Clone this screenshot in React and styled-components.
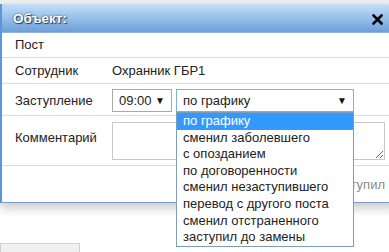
import React, { useState } from "react";
import styled, { createGlobalStyle } from "styled-components";

const GlobalStyle = createGlobalStyle`
  html, body {
    margin: 0;
    padding: 0;
    background: #ffffff;
    overflow: hidden;
    font-family: "Liberation Sans", Arial, sans-serif;
    font-size: 13px;
    color: #222;
  }
`;

const options = [
  "по графику",
  "сменил заболевшего",
  "с опозданием",
  "по договоренности",
  "сменил незаступившего",
  "перевод с другого поста",
  "сменил отстраненного",
  "заступил до замены",
];

const App = () => {
  const [selected, setSelected] = useState(0);

  return (
    <Page>
      <GlobalStyle />
      <TopStrip />
      <Dialog>
        <Header>
          <Title>Объект:</Title>
          <Close>
            <svg width="11" height="11" viewBox="0 0 11 11">
              <path
                d="M1.5 1.5 L9.5 9.5 M9.5 1.5 L1.5 9.5"
                stroke="#000"
                strokeWidth="2.6"
                strokeLinecap="square"
              />
            </svg>
          </Close>
        </Header>
        <Row height={25}>
          <Label>Пост</Label>
        </Row>
        <Row height={26}>
          <Label>Сотрудник</Label>
          <Value>Охранник ГБР1</Value>
        </Row>
        <Row height={32} top>
          <Label shift={4}>Заступление</Label>
          <Controls>
            <FakeSelect width={60}>
              09:00
              <Arrow>▼</Arrow>
            </FakeSelect>
            <SelectWrap>
              <FakeSelect width={178} focused>
                {options[selected]}
                <Arrow>▼</Arrow>
              </FakeSelect>
              <List>
                {options.map((o, i) => (
                  <Option
                    key={i}
                    active={i === selected}
                    onClick={() => setSelected(i)}
                  >
                    {o}
                  </Option>
                ))}
              </List>
            </SelectWrap>
          </Controls>
        </Row>
        <Row height={50} top>
          <Label shift={9}>Комментарий</Label>
          <Comment />
        </Row>
        <Footer>
          <FooterLink>Заступил</FooterLink>
        </Footer>
      </Dialog>
      <BottomBox />
    </Page>
  );
};

export default App;

const Page = styled.div`
  width: 389px;
  height: 252px;
  overflow: hidden;
  position: relative;
`;

const TopStrip = styled.div`
  height: 4px;
  background: #efefef;
`;

const Dialog = styled.div`
  width: 395px;
  background: #fff;
  border-left: 2px solid #5b95dc;
  border-bottom: 1px solid #7b9bcc;
  box-shadow: 0 5px 10px rgba(0, 0, 0, 0.22);
  box-sizing: border-box;
`;

const Header = styled.div`
  height: 29px;
  display: flex;
  align-items: center;
  justify-content: space-between;
  padding: 0 8px 0 11px;
  box-sizing: border-box;
  width: 389px;
  background: linear-gradient(#c3dff8, #9cc3ec 45%, #6c9fd8);
  border-bottom: 1px solid #8fb3de;
`;

const Title = styled.span`
  font-weight: bold;
  font-size: 13.5px;
  color: #fff;
  text-shadow: 0 0 2px #243f60, 1px 1px 1px #243f60;
`;

const Close = styled.span`
  display: flex;
  align-items: center;
  margin-top: 2px;
`;

const Row = styled.div`
  display: flex;
  align-items: ${(p) => (p.top ? "flex-start" : "center")};
  height: ${(p) => p.height}px;
  padding: ${(p) => (p.top ? "5px" : "0")} 0 0 13px;
  box-sizing: border-box;
  border-bottom: 1px solid #dcdcdc;
  width: 389px;
`;

const Label = styled.div`
  width: 97px;
  flex-shrink: 0;
  line-height: 16px;
  padding-top: ${(p) => p.shift || 0}px;
`;

const Value = styled.div`
  line-height: 16px;
`;

const Controls = styled.div`
  display: flex;
  gap: 4px;
`;

const SelectWrap = styled.div`
  position: relative;
`;

const FakeSelect = styled.div`
  width: ${(p) => p.width}px;
  height: 23px;
  box-sizing: border-box;
  border: 1px solid ${(p) => (p.focused ? "#7eaee6" : "#a9a9a9")};
  display: flex;
  align-items: center;
  justify-content: space-between;
  padding: 0 6px 1px 6px;
  background: #fff;
  font-size: 13px;
`;

const Arrow = styled.span`
  font-size: 10px;
  color: #111;
`;

const List = styled.div`
  position: absolute;
  top: 23px;
  left: 0;
  width: 178px;
  box-sizing: border-box;
  border: 1px solid #7f9db9;
  background: #fff;
  z-index: 2;
`;

const Option = styled.div`
  height: 16.6px;
  line-height: 16.6px;
  padding-left: 6px;
  white-space: nowrap;
  font-size: 13px;
  color: ${(p) => (p.active ? "#fff" : "#222")};
  background: ${(p) => (p.active ? "#3399ff" : "#fff")};
  cursor: default;
`;

const Comment = styled.textarea`
  width: 273px;
  height: 38px;
  margin: 1px 0 0 0;
  box-sizing: border-box;
  border: 1px solid #c8c8c8;
  resize: both;
  font-family: inherit;
  font-size: 13px;
`;

const Footer = styled.div`
  height: 36px;
  display: flex;
  align-items: center;
  justify-content: flex-end;
  padding-right: 6px;
  width: 389px;
  box-sizing: border-box;
`;

const FooterLink = styled.span`
  color: #8a8a8a;
  font-size: 13px;
  margin-top: 1px;
`;

const BottomBox = styled.div`
  margin-top: 40px;
  width: 80px;
  height: 10px;
  background: #f0f0f0;
  border: 1px solid #d0d0d0;
  box-sizing: border-box;
`;
